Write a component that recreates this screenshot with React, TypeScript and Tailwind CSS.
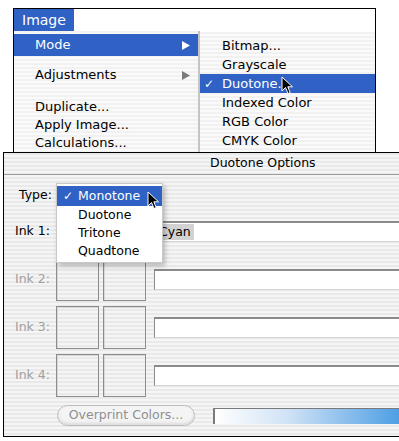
const stripe =
  "bg-[image:repeating-linear-gradient(to_bottom,#f1f1f1_0px,#f1f1f1_2px,#fafafa_2px,#fafafa_4px)]"
const dlgStripe =
  "bg-[image:repeating-linear-gradient(to_bottom,#e9e9e9_0px,#e9e9e9_2px,#f5f5f5_2px,#f5f5f5_4px)]"

function Cursor({ className }: { className: string }) {
  return (
    <svg className={className} width="13" height="19" viewBox="0 0 13 19">
      <path
        d="M1 1 L1 15 L4.5 11.5 L7 17.5 L9.2 16.6 L6.8 10.8 L11.5 10.8 Z"
        fill="#000"
        stroke="#fff"
        strokeWidth="1"
        strokeLinejoin="round"
      />
    </svg>
  )
}

function Triangle({ color }: { color: string }) {
  return (
    <svg width="8" height="9" viewBox="0 0 8 9">
      <path d="M0 0 L8 4.5 L0 9 Z" fill={color} />
    </svg>
  )
}

function MainMenu() {
  return (
    <div className={`w-[186px] h-[121px] ${stripe} border-r-2 border-[#c4c4c4] pt-[3px]`}>
      <div className="h-[22px] bg-[#2f62c4] text-white flex items-center pl-[21px] pr-[8px] justify-between">
        <span>Mode</span>
        <Triangle color="#ffffff" />
      </div>
      <div className="h-[9px]" />
      <div className="h-[20px] flex items-center pl-[21px] pr-[8px] justify-between">
        <span>Adjustments</span>
        <Triangle color="#7a7a7a" />
      </div>
      <div className="h-[13px]" />
      <div className="h-[18px] flex items-center pl-[21px]">Duplicate...</div>
      <div className="h-[18px] flex items-center pl-[21px]">Apply Image...</div>
      <div className="h-[18px] flex items-center pl-[21px]">Calculations...</div>
    </div>
  )
}

function SubMenu() {
  const items = ["Bitmap...", "Grayscale", "Duotone...", "Indexed Color", "RGB Color", "CMYK Color"]
  return (
    <div className={`relative flex-1 h-[120px] mt-[1px] ${stripe} pt-[4px]`}>
      {items.map((t) => (
        <div
          key={t}
          className={`h-[19px] flex items-center pl-[22px] relative ${
            t === "Duotone..." ? "bg-[#2f62c4] text-white" : ""
          }`}
        >
          {t === "Duotone..." && <span className="absolute left-[4px] text-[12px] font-bold">✓</span>}
          {t}
        </div>
      ))}
      <Cursor className="absolute left-[81px] top-[44px]" />
    </div>
  )
}

function InkRow({ label, enabled, value }: { label: string; enabled: boolean; value?: string }) {
  return (
    <div className="flex items-center h-[43px]">
      <div className={`w-[46px] text-right ${enabled ? "text-black" : "text-[#a0a0a0]"}`}>{label}</div>
      <div className="ml-[6px] flex gap-[4px]">
        <div className="w-[43px] h-[43px] border border-[#8c8c8c] shadow-[inset_1px_1px_0_#d8d8d8]" />
        <div className="w-[43px] h-[43px] border border-[#8c8c8c] shadow-[inset_1px_1px_0_#d8d8d8]" />
      </div>
      <div className="ml-[8px] flex-1 h-[21px] bg-white border-t-2 border-l border-[#8a8a8a] border-b border-b-[#d4d4d4] flex items-center pl-[1px]">
        {value && <span className="bg-[#d2d2d2] px-[3px] leading-[16px] text-black">{value}</span>}
      </div>
    </div>
  )
}

export default function App() {
  return (
    <div className="w-[399px] h-[441px] bg-white overflow-hidden font-['DejaVu_Sans',sans-serif] text-[13px] text-black">
      {/* menus */}
      <div className="h-[152px] pt-[8px] pl-[13px] overflow-hidden">
        <div className="w-[363px] h-[144px] border-t border-l border-r border-black">
          <div className="h-[22px] flex">
            <div className="w-[60px] bg-[#2f62c4] text-white text-[14px] flex items-center pl-[8px]">Image</div>
          </div>
          <div className="flex">
            <MainMenu />
            <SubMenu />
          </div>
        </div>
      </div>

      {/* dialog */}
      <div className={`relative h-[285px] ml-[3px] border-t border-l border-b border-black ${dlgStripe} text-[12.5px]`}>
        <div className="h-[22px] border-b border-[#9c9c9c] flex items-center pl-[206px]">Duotone Options</div>
        <div className="pt-[10px]">
          <div className="h-[20px] flex items-center pl-[15px]">Type:</div>
          <div className="mt-[5px] flex flex-col gap-[5px]">
            <InkRow label="Ink 1:" enabled value="Cyan" />
            <InkRow label="Ink 2:" enabled={false} />
            <InkRow label="Ink 3:" enabled={false} />
            <InkRow label="Ink 4:" enabled={false} />
          </div>
          <div className="mt-[8px] flex items-center">
            <div className="ml-[53px] w-[138px] h-[21px] rounded-full border border-[#bcbcbc] bg-[#f4f4f4] shadow-[inset_0_-2px_3px_#dcdcdc] text-[#8f8f8f] flex items-center justify-center">
              Overprint Colors...
            </div>
            <div className="ml-[18px] flex-1 h-[16px] border-l-2 border-t border-[#7a7a7a] bg-[linear-gradient(to_right,#ffffff,#cfe2f5_40%,#4d9fe4)]" />
          </div>
        </div>

        {/* open popup */}
        <div className="absolute left-[52px] top-[30px] w-[107px] h-[80px] bg-white border border-[#c8c8c8] shadow-[2px_3px_5px_rgba(0,0,0,0.25)] pt-[2px]">
          <div className="h-[20px] bg-[#2f62c4] text-white flex items-center pl-[21px] relative">
            <span className="absolute left-[6px] text-[12px] font-bold">✓</span>
            Monotone
          </div>
          <div className="h-[18px] flex items-center pl-[21px]">Duotone</div>
          <div className="h-[18px] flex items-center pl-[21px]">Tritone</div>
          <div className="h-[18px] flex items-center pl-[21px]">Quadtone</div>
          <Cursor className="absolute left-[90px] top-[7px]" />
        </div>
      </div>
    </div>
  )
}
